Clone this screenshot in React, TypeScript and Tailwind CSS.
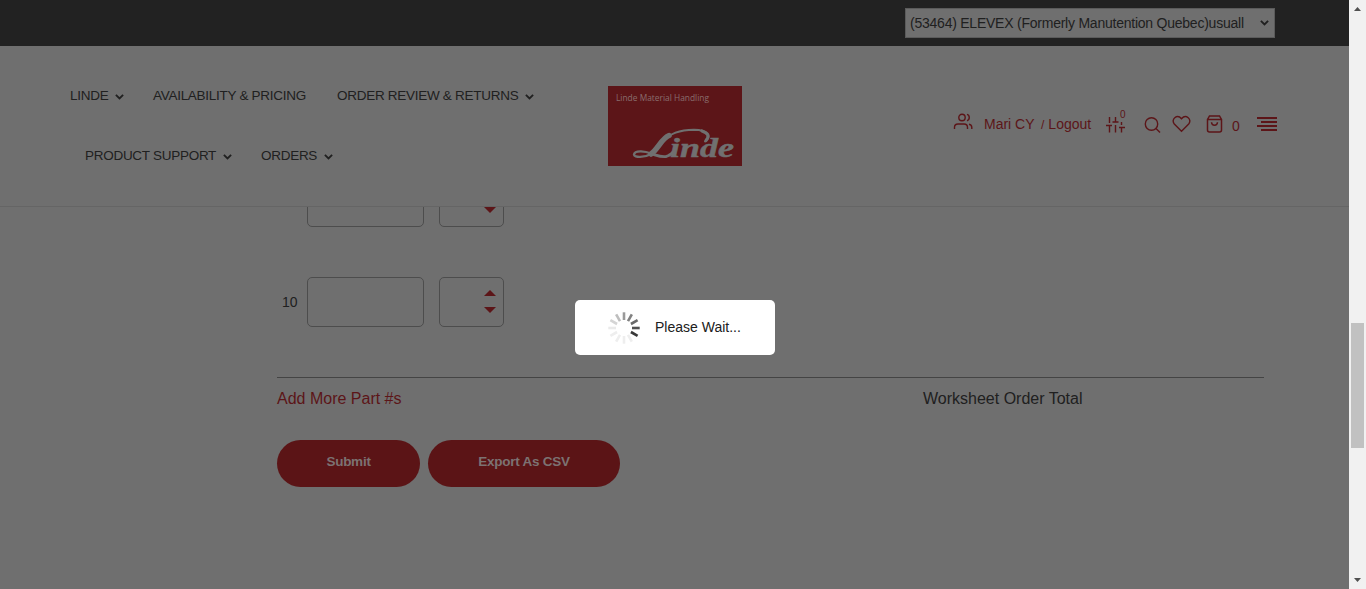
import React from "react";

function Chevron({ className = "" }: { className?: string }) {
  return (
    <svg className={`shrink-0 ${className}`} width="9" height="6" viewBox="0 0 9 6" fill="none" stroke="#202020" strokeWidth="1.9">
      <path d="M0.9 0.9 4.5 4.4 8.1 0.9" />
    </svg>
  );
}

function NavItem({ label, width, menu = false }: { label: string; width: string; menu?: boolean }) {
  return (
    <a className={`flex h-[60px] shrink-0 items-center whitespace-nowrap ${width}`}>
      <span>{label}</span>
      {menu && <Chevron className="mt-[1px] ml-[7px]" />}
    </a>
  );
}

function Logo() {
  return (
    <svg className="block" width="134" height="80" viewBox="0 0 134 80">
      <rect width="134" height="80" fill="#5c1518" />
      <text x="8" y="15" fill="#8a6e6e" fontSize="8.6" textLength="93" lengthAdjust="spacingAndGlyphs" fontFamily="'Open Sans', 'Noto Sans', sans-serif">
        Linde Material Handling
      </text>
      <g fill="none" stroke="#707070" strokeLinecap="round">
        <path d="M97 55.500C103 51 101 44 86 43.800C71 44 62 47 56 55" strokeWidth="2" />
        <path d="M98 54.500C102 50 100 47 94 45" strokeWidth="3.200" />
        <path d="M61 49.500C54 52 50 63 43 68" strokeWidth="5.500" />
        <path d="M43 68C37 71.500 26 72 26 68.500C27 63.500 38 65.500 43 67.500" strokeWidth="2.400" />
        <path d="M42 67.500C48 69 53 71.500 58 70.500C61 70 63 68 65 66" strokeWidth="2.800" />
      </g>
      <text x="62" y="71" fill="#707070" stroke="#707070" strokeWidth="0.5" fontSize="28" fontWeight="700" fontStyle="italic" textLength="64" lengthAdjust="spacingAndGlyphs" fontFamily="'Liberation Serif', serif">
        inde
      </text>
    </svg>
  );
}

function Spinner() {
  const shades = ["#9a9a9a", "#818181", "#696969", "#505050", "#383838", "#eeeeee", "#eeeeee", "#eeeeee", "#eeeeee", "#eaeaea", "#d5d5d5", "#bebebe"];
  return (
    <svg width="32" height="32" viewBox="0 0 32 32" strokeWidth="2.600">
      {shades.map((shade, i) => (
        <line key={i} x1="16" y1="0.300" x2="16" y2="8" stroke={shade} transform={`rotate(${i * 30} 16 16)`} />
      ))}
    </svg>
  );
}

function Tools() {
  return (
    <div className="flex h-[40px] w-[324px] items-start text-[14px] leading-[20px] text-[#5c1518]">
      <svg className="mt-[10px] w-[20px] shrink-0" height="18" viewBox="0 0 20 18" fill="none" stroke="currentColor" strokeWidth="1.4">
        <circle cx="9" cy="4.500" r="3.200" />
        <path d="M1.500 16v-1.500c0-2.500 1.500-3.500 3.500-3.500h6c2.500 0 3.500 1.200 3.500 3.500V16M14 1.400c3 .8 3 5.500 0 6.300M16 11.200c2.200.3 2.800 1.700 2.800 3.300V16" />
      </svg>
      <span className="mt-[11px] ml-[11px] w-[57px] shrink-0 whitespace-nowrap">Mari CY</span>
      <span className="mt-[11px] w-[65px] shrink-0 whitespace-nowrap"><span className="mr-[4px] text-[12px]">/</span>Logout</span>
      <svg className="mt-[13px] shrink-0" width="19" height="18" viewBox="0 0 19 18" fill="none" stroke="currentColor" strokeWidth="1.4">
        <path d="M3.500 1v6M0 9.500h6M3.500 9.500V16.500M9.500 1v5M6.500 6h6M9.500 9v7.500M15.500 6v3M13 11.500h6M15.500 11.500v5" />
      </svg>
      <span className="mt-[6px] -ml-[5px] w-[24px] shrink-0 text-[10px] leading-[12px]">0</span>
      <svg className="mt-[14px] shrink-0" width="17" height="16" viewBox="0 0 17 16" fill="none" stroke="currentColor" strokeWidth="1.4">
        <circle cx="7.500" cy="7" r="6.200" /><path d="m12 11.500 4 4" />
      </svg>
      <svg className="mt-[12px] ml-[11px] shrink-0" width="20" height="18" viewBox="0 0 20 18" fill="none" stroke="currentColor" strokeWidth="1.4">
        <path d="M9.500 16.200 2.300 9C-1.500 4.500 5-1.500 9.500 3.700 14-1.500 20.500 4.500 16.700 9Z" />
      </svg>
      <svg className="mt-[12px] ml-[14px] shrink-0" width="18" height="18" viewBox="0 0 18 18" fill="none" stroke="currentColor" strokeWidth="1.5">
        <path d="M3.500 1h10l2 3.500V15q0 2-2 2h-10q-2 0-2-2V4.500ZM1.500 4.500h14M5.500 7.200c.3 4 5.700 4 6 0" />
      </svg>
      <span className="mt-[13px] ml-[8px] w-[25px] shrink-0">0</span>
      <svg className="mt-[14px] shrink-0" width="20" height="14" viewBox="0 0 20 14" fill="currentColor">
        <path d="M0 0h20v2H0ZM4 4h16v2H4ZM0 8h20v2H0ZM4 12h16v2H4Z" />
      </svg>
    </div>
  );
}

function Stepper() {
  return (
    <div className="flex h-[50px] w-[65px] flex-col items-end justify-center gap-[11px] rounded-[5px] border border-[#4d4d4d] pr-[7px] pb-[2px]">
      <svg width="12" height="6" viewBox="0 0 12 6" fill="#5c1518"><path d="M0 6 6 0l6 6Z" /></svg>
      <svg width="12" height="6" viewBox="0 0 12 6" fill="#5c1518"><path d="M0 0h12L6 6Z" /></svg>
    </div>
  );
}

function PartRow({ number }: { number?: string }) {
  return (
    <div className="flex h-[50px] items-center">
      <span className="w-[30px] pl-[5px] text-[14px]">{number}</span>
      <div className="mr-[15px] h-[50px] w-[117px] rounded-[5px] border border-[#4d4d4d]" />
      <Stepper />
    </div>
  );
}

function ScrollBar() {
  return (
    <div className="flex h-full w-[17px] flex-col items-center bg-[#f1f1f1]">
      <svg className="mt-[7px]" width="7" height="4" viewBox="0 0 7 4" fill="#505050"><path d="M0 4 3.500 0 7 4Z" /></svg>
      <div className="mt-[312px] h-[125px] w-[13px] bg-[#c1c1c1]" />
      <svg className="mt-auto mb-[7px]" width="7" height="4" viewBox="0 0 7 4" fill="#505050"><path d="M0 0h7L3.500 4Z" /></svg>
    </div>
  );
}

export default function App() {
  return (
    <div className="relative flex h-[589px] w-[1366px] overflow-hidden bg-[#6f6f6f] font-['Liberation_Sans',Arial,sans-serif] text-[#202020]">
      <div className="flex w-[1349px] flex-col">
        <div className="flex h-[46px] shrink-0 justify-end bg-[#222222] pt-[8px] pr-[74px]">
          <div className="flex h-[30px] w-[370px] items-center border border-[#5b5b5b] bg-[#6f6f6f] pr-[5px] pl-[4px] text-[14px]">
            <span className="whitespace-nowrap tracking-[-0.235px]">(53464) ELEVEX (Formerly Manutention Quebec)usuall</span>
            <Chevron className="ml-auto" />
          </div>
        </div>
        <header className="flex h-[161px] shrink-0 border-b border-[#656565]">
          <nav className="w-[538px] pt-[20px] pl-[70px] text-[13.5px] tracking-[-0.28px]">
            <div className="flex">
              <NavItem label="LINDE" width="w-[83px]" menu />
              <NavItem label="AVAILABILITY & PRICING" width="w-[184px]" />
              <NavItem label="ORDER REVIEW & RETURNS" width="w-[198px]" menu />
            </div>
            <div className="flex pl-[15px]">
              <NavItem label="PRODUCT SUPPORT" width="w-[176px]" menu />
              <NavItem label="ORDERS" width="w-[71px]" menu />
            </div>
          </nav>
          <div className="ml-[70px] w-[134px] pt-[40px]"><Logo /></div>
          <div className="ml-[211px] pt-[57px]"><Tools /></div>
        </header>
        <main className="flex grow flex-col pl-[277px]">
          <div className="flex h-[20px] shrink-0 flex-col justify-end overflow-hidden"><PartRow /></div>
          <div className="mt-[50px]"><PartRow number="10" /></div>
          <div className="mt-[50px] flex h-[63px] w-[987px] border-t border-[#444444] pt-[9px] text-[16px] leading-[24px]">
            <a className="w-[646px] text-[#5c1518]">Add More Part #s</a>
            <span>Worksheet Order Total</span>
          </div>
          <div className="flex gap-[8px] text-[13.5px] font-bold tracking-[-0.25px] text-[#7c7272]">
            <button className="h-[47px] w-[143px] rounded-full bg-[#5b1416] pb-[2px]">Submit</button>
            <button className="h-[47px] w-[192px] rounded-full bg-[#5b1416] pb-[2px]">Export As CSV</button>
          </div>
        </main>
      </div>
      <ScrollBar />
      <div className="absolute top-[300px] left-[575px] flex h-[55px] w-[200px] items-center rounded-[5px] bg-white pl-[33px] text-[14px]">
        <Spinner />
        <span className="ml-[15px] whitespace-nowrap">Please Wait...</span>
      </div>
    </div>
  );
}
